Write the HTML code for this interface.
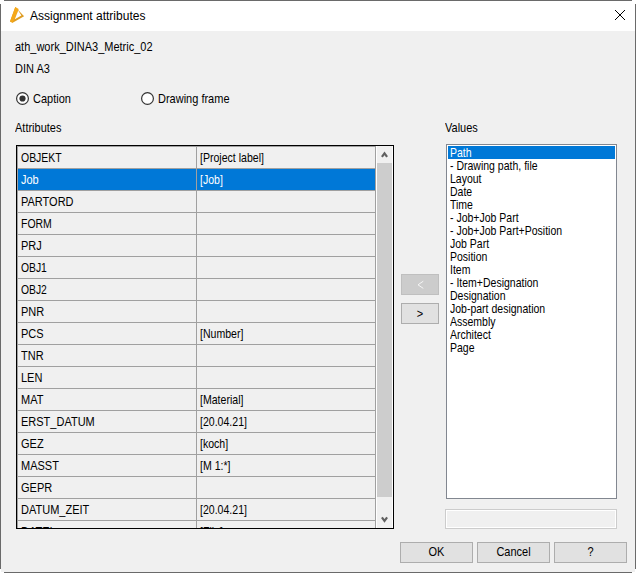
<!DOCTYPE html>
<html><head><meta charset="utf-8">
<style>
*{margin:0;padding:0;box-sizing:border-box}
html,body{width:636px;height:573px;overflow:hidden;background:#fff}
body{position:relative;font-family:"Liberation Sans",sans-serif;font-size:11px;color:#000}
.a{position:absolute}
.t{position:absolute;white-space:nowrap;line-height:13px;font-size:11px;transform:scaleY(1.12);transform-origin:0 10px}
.tt{position:absolute;white-space:nowrap}
.bl{position:absolute;background:#6A6A6A}
</style></head><body>
<!-- window frame -->
<div class="bl" style="left:4px;top:0;width:628px;height:1px"></div>
<div class="bl" style="left:4px;top:572px;width:628px;height:1px"></div>
<div class="bl" style="left:0;top:4px;width:1px;height:565px"></div>
<div class="bl" style="left:635px;top:4px;width:1px;height:565px"></div>
<!-- title bar -->
<div class="a" style="left:1px;top:1px;width:634px;height:30px;background:#fff"></div>
<svg class="a" style="left:0;top:0" width="30" height="30" viewBox="0 0 30 30">
  <polygon points="15.3,6.9 24.1,16.2 12.6,22.8 10.0,21.4" fill="#DE9C22"/>
  <polygon points="15.3,6.9 18.7,8.9 14.6,18.9 12.6,22.8 10.0,21.4" fill="#F5A81A"/>
  <polygon points="18.2,10.4 21.4,15.4 14.8,19.2" fill="#fff"/>
</svg>
<div class="tt" style="left:30px;top:9px;font-size:12px;line-height:14px">Assignment attributes</div>
<svg class="a" style="left:615px;top:10px" width="10" height="10" viewBox="0 0 10 10" shape-rendering="crispEdges" fill="#000"><rect x="0" y="0" width="1" height="1"/><rect x="9" y="0" width="1" height="1"/><rect x="1" y="1" width="1" height="1"/><rect x="8" y="1" width="1" height="1"/><rect x="2" y="2" width="1" height="1"/><rect x="7" y="2" width="1" height="1"/><rect x="3" y="3" width="1" height="1"/><rect x="6" y="3" width="1" height="1"/><rect x="4" y="4" width="1" height="1"/><rect x="5" y="4" width="1" height="1"/><rect x="5" y="5" width="1" height="1"/><rect x="4" y="5" width="1" height="1"/><rect x="6" y="6" width="1" height="1"/><rect x="3" y="6" width="1" height="1"/><rect x="7" y="7" width="1" height="1"/><rect x="2" y="7" width="1" height="1"/><rect x="8" y="8" width="1" height="1"/><rect x="1" y="8" width="1" height="1"/><rect x="9" y="9" width="1" height="1"/><rect x="0" y="9" width="1" height="1"/></svg>
<!-- body -->
<div class="a" style="left:1px;top:31px;width:634px;height:541px;background:#F0F0F0"></div>

<div class="t" style="left:15px;top:41px">ath_work_DINA3_Metric_02</div>
<div class="t" style="left:15px;top:63px">DIN A3</div>

<!-- radios -->
<svg class="a" style="left:16px;top:92px" width="13" height="13" viewBox="0 0 13 13">
  <circle cx="6.5" cy="6.5" r="5.9" fill="#fff" stroke="#333" stroke-width="1.2"/>
  <circle cx="6.5" cy="6.5" r="3.1" fill="#333"/>
</svg>
<div class="t" style="left:33px;top:93px">Caption</div>
<svg class="a" style="left:141px;top:92px" width="13" height="13" viewBox="0 0 13 13">
  <circle cx="6.5" cy="6.5" r="5.9" fill="#fff" stroke="#333" stroke-width="1.2"/>
</svg>
<div class="t" style="left:158px;top:93px">Drawing frame</div>

<div class="t" style="left:15px;top:122px">Attributes</div>
<div class="t" style="left:445px;top:122px">Values</div>

<!-- grid -->
<div class="a" style="left:16px;top:145px;width:378px;height:384px;border:1px solid #000;background:#F0F0F0;overflow:hidden" id="grid">
<div class="a" style="left:1px;top:23px;width:357px;height:21px;background:#0078D7"></div>
<div class="a" style="left:0;top:22px;width:358px;height:1px;background:#A0A0A0"></div>
<div class="a" style="left:0;top:44px;width:358px;height:1px;background:#A0A0A0"></div>
<div class="a" style="left:0;top:66px;width:358px;height:1px;background:#A0A0A0"></div>
<div class="a" style="left:0;top:88px;width:358px;height:1px;background:#A0A0A0"></div>
<div class="a" style="left:0;top:110px;width:358px;height:1px;background:#A0A0A0"></div>
<div class="a" style="left:0;top:132px;width:358px;height:1px;background:#A0A0A0"></div>
<div class="a" style="left:0;top:154px;width:358px;height:1px;background:#A0A0A0"></div>
<div class="a" style="left:0;top:176px;width:358px;height:1px;background:#A0A0A0"></div>
<div class="a" style="left:0;top:198px;width:358px;height:1px;background:#A0A0A0"></div>
<div class="a" style="left:0;top:220px;width:358px;height:1px;background:#A0A0A0"></div>
<div class="a" style="left:0;top:242px;width:358px;height:1px;background:#A0A0A0"></div>
<div class="a" style="left:0;top:264px;width:358px;height:1px;background:#A0A0A0"></div>
<div class="a" style="left:0;top:286px;width:358px;height:1px;background:#A0A0A0"></div>
<div class="a" style="left:0;top:308px;width:358px;height:1px;background:#A0A0A0"></div>
<div class="a" style="left:0;top:330px;width:358px;height:1px;background:#A0A0A0"></div>
<div class="a" style="left:0;top:352px;width:358px;height:1px;background:#A0A0A0"></div>
<div class="a" style="left:0;top:374px;width:358px;height:1px;background:#A0A0A0"></div>
<div class="a" style="left:179px;top:0;width:1px;height:384px;background:#A0A0A0"></div>
<div class="a" style="left:0;top:0;width:358px;height:1px;background:#A0A0A0"></div>
<div class="a" style="left:0;top:0;width:1px;height:384px;background:#A0A0A0"></div>
<div class="a" style="left:358px;top:0;width:1px;height:384px;background:#A0A0A0"></div>
<div class="t" style="left:4px;top:6px;color:#000;transform:scale(0.95,1.12)">OBJEKT</div>
<div class="t" style="left:183px;top:6px;color:#000;transform:scale(0.96,1.12)">[Project label]</div>
<div class="t" style="left:4px;top:28px;color:#fff;transform:scale(1.0,1.12)">Job</div>
<div class="t" style="left:183px;top:28px;color:#fff;transform:scale(0.96,1.12)">[Job]</div>
<div class="t" style="left:4px;top:50px;color:#000;transform:scale(1.0,1.12)">PARTORD</div>
<div class="t" style="left:4px;top:72px;color:#000;transform:scale(0.95,1.12)">FORM</div>
<div class="t" style="left:4px;top:94px;color:#000;transform:scale(1.0,1.12)">PRJ</div>
<div class="t" style="left:4px;top:116px;color:#000;transform:scale(0.94,1.12)">OBJ1</div>
<div class="t" style="left:4px;top:138px;color:#000;transform:scale(0.94,1.12)">OBJ2</div>
<div class="t" style="left:4px;top:160px;color:#000;transform:scale(1.0,1.12)">PNR</div>
<div class="t" style="left:4px;top:182px;color:#000;transform:scale(1.0,1.12)">PCS</div>
<div class="t" style="left:183px;top:182px;color:#000;transform:scale(0.96,1.12)">[Number]</div>
<div class="t" style="left:4px;top:204px;color:#000;transform:scale(1.0,1.12)">TNR</div>
<div class="t" style="left:4px;top:226px;color:#000;transform:scale(1.0,1.12)">LEN</div>
<div class="t" style="left:4px;top:248px;color:#000;transform:scale(1.0,1.12)">MAT</div>
<div class="t" style="left:183px;top:248px;color:#000;transform:scale(0.96,1.12)">[Material]</div>
<div class="t" style="left:4px;top:270px;color:#000;transform:scale(1.0,1.12)">ERST_DATUM</div>
<div class="t" style="left:183px;top:270px;color:#000;transform:scale(0.96,1.12)">[20.04.21]</div>
<div class="t" style="left:4px;top:292px;color:#000;transform:scale(1.0,1.12)">GEZ</div>
<div class="t" style="left:183px;top:292px;color:#000;transform:scale(0.96,1.12)">[koch]</div>
<div class="t" style="left:4px;top:314px;color:#000;transform:scale(1.0,1.12)">MASST</div>
<div class="t" style="left:183px;top:314px;color:#000;transform:scale(0.96,1.12)">[M 1:*]</div>
<div class="t" style="left:4px;top:336px;color:#000;transform:scale(1.0,1.12)">GEPR</div>
<div class="t" style="left:4px;top:358px;color:#000;transform:scale(1.0,1.12)">DATUM_ZEIT</div>
<div class="t" style="left:183px;top:358px;color:#000;transform:scale(0.96,1.12)">[20.04.21]</div>
<div class="t" style="left:4px;top:380px;color:#000;transform:scale(1.0,1.12)">DATEI</div>
<div class="t" style="left:183px;top:380px;color:#000;transform:scale(0.96,1.12)">[File]</div>
<div class="a" style="left:359px;top:0;width:17px;height:384px;background:#F0F0F0"></div>
<div class="a" style="left:359px;top:0;width:1px;height:384px;background:#fff"></div>
<div class="a" style="left:375px;top:0;width:1px;height:384px;background:#fff"></div>
<div class="a" style="left:360px;top:17px;width:15px;height:334px;background:#CDCDCD"></div>
<svg class="a" style="left:362px;top:4px" width="11" height="9" viewBox="0 0 11 9"><path d="M2.9,6.9 L5.5,3.4 L8.1,6.9" fill="none" stroke="#606060" stroke-width="2.2"/></svg>
<svg class="a" style="left:362px;top:369px" width="11" height="9" viewBox="0 0 11 9"><path d="M2.9,2.4 L5.5,5.9 L8.1,2.4" fill="none" stroke="#606060" stroke-width="2.2"/></svg>
</div>

<!-- arrow buttons -->
<div class="a" style="left:401px;top:274px;width:38px;height:21px;background:#CCCCCC;border:1px solid #BFBFBF"></div>
<svg class="a" style="left:410px;top:276px" width="20" height="16" viewBox="0 0 20 16"><path d="M13.3,5.2 L8,8.8 L13.3,12.4" fill="none" stroke="#F6F6F6" stroke-width="1"/></svg>
<div class="a" style="left:401px;top:303px;width:38px;height:21px;background:#E1E1E1;border:1px solid #ADADAD"></div>
<div class="t" style="left:401px;top:308px;width:38px;text-align:center">&gt;</div>

<!-- listbox -->
<div class="a" style="left:446px;top:144px;width:171px;height:355px;background:#fff;border:1px solid #828790"></div>
<div class="a" style="left:448px;top:146px;width:167px;height:13px;background:#0078D7"></div>
<div id="list">
<div class="t" style="left:450px;top:147px;color:#fff;transform:scale(0.955,1.12)">Path</div>
<div class="t" style="left:450px;top:160px;color:#000;transform:scale(0.955,1.12)">- Drawing path, file</div>
<div class="t" style="left:450px;top:173px;color:#000;transform:scale(0.955,1.12)">Layout</div>
<div class="t" style="left:450px;top:186px;color:#000;transform:scale(0.955,1.12)">Date</div>
<div class="t" style="left:450px;top:199px;color:#000;transform:scale(0.955,1.12)">Time</div>
<div class="t" style="left:450px;top:212px;color:#000;transform:scale(0.955,1.12)">- Job+Job Part</div>
<div class="t" style="left:450px;top:225px;color:#000;transform:scale(0.955,1.12)">- Job+Job Part+Position</div>
<div class="t" style="left:450px;top:238px;color:#000;transform:scale(0.955,1.12)">Job Part</div>
<div class="t" style="left:450px;top:251px;color:#000;transform:scale(0.955,1.12)">Position</div>
<div class="t" style="left:450px;top:264px;color:#000;transform:scale(0.955,1.12)">Item</div>
<div class="t" style="left:450px;top:277px;color:#000;transform:scale(0.955,1.12)">- Item+Designation</div>
<div class="t" style="left:450px;top:290px;color:#000;transform:scale(0.955,1.12)">Designation</div>
<div class="t" style="left:450px;top:303px;color:#000;transform:scale(0.955,1.12)">Job-part designation</div>
<div class="t" style="left:450px;top:316px;color:#000;transform:scale(0.955,1.12)">Assembly</div>
<div class="t" style="left:450px;top:329px;color:#000;transform:scale(0.955,1.12)">Architect</div>
<div class="t" style="left:450px;top:342px;color:#000;transform:scale(0.955,1.12)">Page</div>
</div>

<!-- textbox -->
<div class="a" style="left:445px;top:509px;width:172px;height:20px;background:#F0F0F0;border:1px solid #CCCCCC;box-shadow:inset 0 0 0 1px #fff"></div>

<!-- buttons -->
<div class="a" style="left:400px;top:542px;width:73px;height:21px;background:#E1E1E1;border:1px solid #ADADAD"></div>
<div class="t" style="left:400px;top:546px;width:73px;text-align:center">OK</div>
<div class="a" style="left:477px;top:542px;width:73px;height:21px;background:#E1E1E1;border:1px solid #ADADAD"></div>
<div class="t" style="left:477px;top:546px;width:73px;text-align:center">Cancel</div>
<div class="a" style="left:554px;top:542px;width:73px;height:21px;background:#E1E1E1;border:1px solid #ADADAD"></div>
<div class="t" style="left:554px;top:546px;width:73px;text-align:center">?</div>
</body></html>
